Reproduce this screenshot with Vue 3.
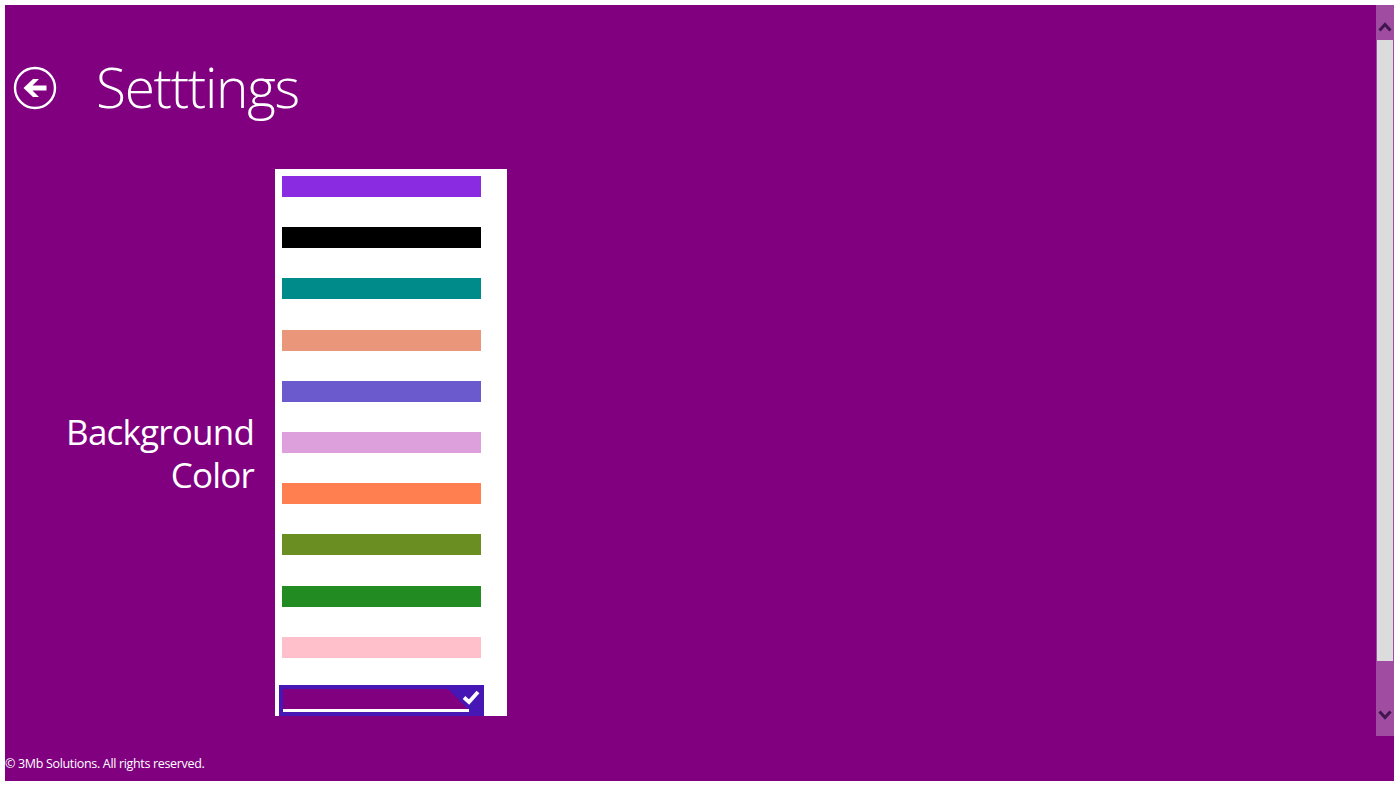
<template>
  <div class="page">
    <div class="frame">
      <div class="top">
        <main class="main">
          <header class="header">
            <button class="back" type="button" aria-label="Back">
              <svg width="44" height="44" viewBox="0 0 44 44">
                <circle cx="22" cy="22" r="20" fill="none" stroke="#fff" stroke-width="2.4" />
                <path d="M10.5 22 L20 13 H26 L19.5 19.5 H33.5 V24.5 H19.5 L26 31 H20 Z" fill="#fff" />
              </svg>
            </button>
            <h1>Setttings</h1>
          </header>

          <section class="setting">
            <h2>Background<br />Color</h2>
            <div class="list">
              <div v-for="c in colors" :key="c" class="swatch" :style="{ background: c }"></div>
              <div class="selected">
                <div class="selected-fill"></div>
                <div class="selected-line"></div>
                <svg class="check" width="18" height="16" viewBox="0 0 18 16">
                  <path d="M2 8.5 L7 13 L16 3" fill="none" stroke="#fff" stroke-width="3.8" />
                </svg>
              </div>
            </div>
          </section>
        </main>

        <div class="scrollbar">
          <div class="arrow">
            <svg width="14" height="10" viewBox="0 0 14 10">
              <path d="M1.5 8.5 L7 2.5 L12.5 8.5" fill="none" stroke="#40164e" stroke-width="3" />
            </svg>
          </div>
          <div class="thumb"></div>
          <div class="arrow arrow-down">
            <svg width="14" height="10" viewBox="0 0 14 10">
              <path d="M1.5 1.5 L7 7.5 L12.5 1.5" fill="none" stroke="#40164e" stroke-width="3" />
            </svg>
          </div>
        </div>
      </div>

      <footer class="footer">© 3Mb Solutions. All rights reserved.</footer>
    </div>
  </div>
</template>

<script setup>
const colors = [
  "#8a2be2",
  "#000000",
  "#008b8b",
  "#e9967a",
  "#6a5acd",
  "#dda0dd",
  "#ff7f50",
  "#6b8e23",
  "#228b22",
  "#ffc0cb",
];
</script>

<style scoped>
.page { width: 1399px; height: 787px; padding: 5px 5px 6px 5px; box-sizing: border-box; background: #fff; overflow: hidden; }
.frame { width: 1389px; height: 776px; background: #800080; color: #fff; font-family: "Open Sans", "Noto Sans", sans-serif; display: flex; flex-direction: column; }
.top { display: flex; height: 731px; }
.main { flex: 1; min-width: 0; }

.header { height: 164px; display: flex; align-items: flex-start; box-sizing: border-box; padding: 61px 0 0 8px; }
.back { width: 44px; height: 44px; padding: 0; margin: 0; border: 0; background: none; display: block; }
.back svg { display: block; }
h1 { margin: -14px 0 0 39px; font-size: 55px; line-height: 70px; font-weight: 300; letter-spacing: -1.3px; }

.setting { display: flex; align-items: center; height: 547px; }
h2 { width: 249px; margin: 0; padding-top: 20px; text-align: right; font-size: 35px; line-height: 43px; font-weight: 400; letter-spacing: -0.8px; }
.list { margin-left: 21px; width: 232px; height: 547px; box-sizing: border-box; padding: 7px 0 0 7px; background: #fff; overflow: hidden; }
.swatch { width: 199px; height: 21px; margin-bottom: 30.2px; }

.selected { position: relative; width: 205px; height: 40px; margin: -3px 0 0 -3px; background: #4617b4; }
.selected-fill { position: absolute; left: 4px; top: 4px; width: 185px; height: 20px; background: #800080; clip-path: polygon(0 0, 165px 0, 185px 20px, 0 20px); }
.selected-line { position: absolute; left: 4px; top: 24px; width: 186px; height: 3px; background: #fff; }
.check { position: absolute; right: 4px; top: 4px; }

.scrollbar { width: 18px; display: flex; flex-direction: column; background: #a04ca0; }
.arrow { height: 35px; display: flex; align-items: center; justify-content: center; padding-top: 9px; box-sizing: border-box; }
.arrow-down { height: 75px; align-items: flex-end; padding: 0 0 16px; }
.thumb { flex: 1; margin: 0 1px 0 1px; background: #dcdcdc; }

.footer { flex: 1; font-size: 12.5px; line-height: 18px; padding-top: 19px; letter-spacing: -0.33px; }
</style>

<style>
body { background: #fff; }
</style>
